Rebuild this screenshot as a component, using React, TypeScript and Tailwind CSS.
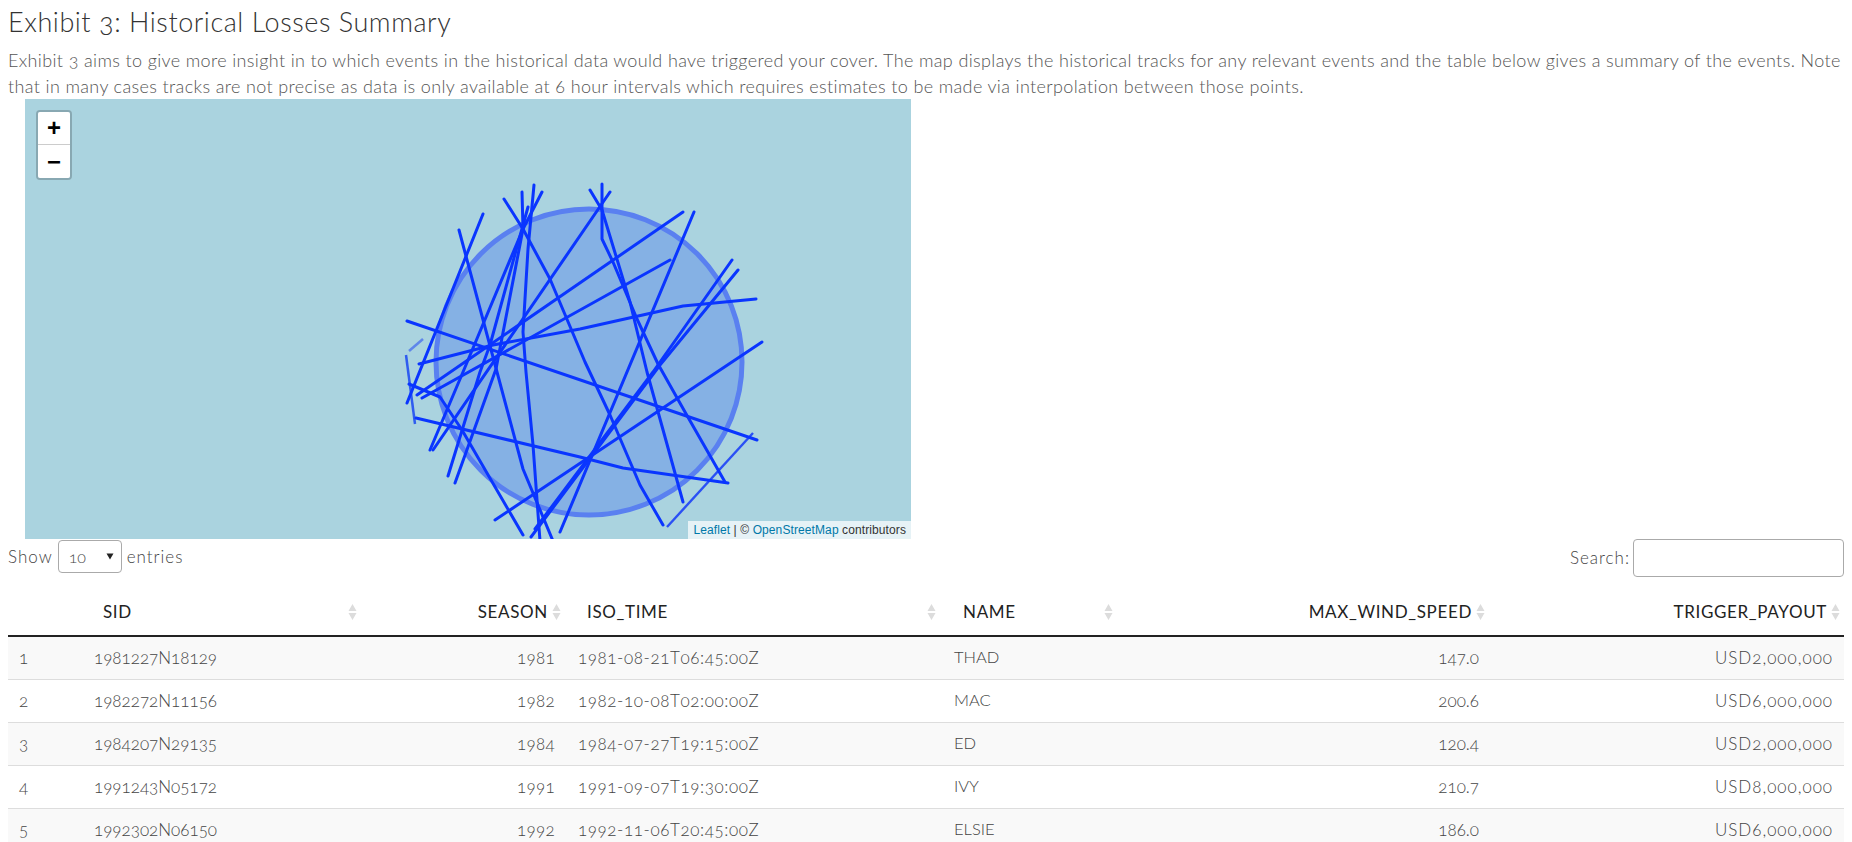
const rows = [
  ['1', '1981227N18129', '1981', '1981-08-21T06:45:00Z', 'THAD', '147.0', 'USD2,000,000'],
  ['2', '1982272N11156', '1982', '1982-10-08T02:00:00Z', 'MAC', '200.6', 'USD6,000,000'],
  ['3', '1984207N29135', '1984', '1984-07-27T19:15:00Z', 'ED', '120.4', 'USD2,000,000'],
  ['4', '1991243N05172', '1991', '1991-09-07T19:30:00Z', 'IVY', '210.7', 'USD8,000,000'],
  ['5', '1992302N06150', '1992', '1992-11-06T20:45:00Z', 'ELSIE', '186.0', 'USD6,000,000']
]

// event tracks, in page coordinates of the reference
const tracks = [
  '483,212 407,401',
  '459,228 497,370 523,467 553,539',
  '407,319 757,438',
  '419,362 493,343 580,327 683,304 756,297',
  '504,197 523,227 550,277 585,360 610,413 640,483 663,523',
  '542,190 523,227 463,370 430,448',
  '534,183 528,247 523,330 526,370 533,443 540,539',
  '522,190 523,227 496,367 455,481',
  '528,205 490,343 480,370 448,474',
  '610,190 433,448',
  '683,210 417,393',
  '670,258 422,396',
  '694,210 560,530',
  '732,258 653,370 535,527',
  '738,268 660,363 531,535',
  '762,340 495,518',
  '409,382 440,395 462,428 523,533',
  '416,416 580,455 623,466 728,481',
  '602,182 602,237 613,260 637,317 658,362 685,410 725,480',
  '590,188 602,208 630,300 647,370 683,500'
]

function SortIcon() {
  return (
    <svg width="9" height="18" viewBox="0 0 9 18" className="shrink-0 text-[#dcdcdc]">
      <path d="M4.5 1 L8.5 8 L0.5 8 Z M0.5 10 L8.5 10 L4.5 17 Z" fill="currentColor" />
    </svg>
  )
}

function Header({ label, right, pad }: { label: string; right?: boolean; pad: string }) {
  return (
    <th className={`h-[55px] pt-[7px] text-[17px] font-normal tracking-[0.65px] text-[#222] ${pad}`}>
      <div className={right ? 'flex items-center justify-end gap-[4px]' : 'flex items-center justify-between'}>
        <span>{label}</span>
        <SortIcon />
      </div>
    </th>
  )
}

export default function App() {
  return (
    <div className="h-[842px] overflow-hidden bg-white px-[8px] font-['Lato','Open_Sans',sans-serif] font-light text-[#555] [font-feature-settings:'onum']">
      <h3 className="pt-[6px] text-[27px] leading-[32px] tracking-[0.55px] text-[#333]">
        Exhibit 3: Historical Losses Summary
      </h3>
      <p className="mt-[9px] text-[18px] leading-[26px] tracking-[0.36px] text-[#555]">
        Exhibit 3 aims to give more insight in to which events in the historical data would have triggered your cover. The map displays the historical tracks for any relevant events and the table below gives a summary of the events. Note that in many cases tracks are not precise as data is only available at 6 hour intervals which requires estimates to be made via interpolation between those points.
      </p>

      <div className="relative ml-[17px] h-[440px] w-[886px] overflow-hidden bg-[#aad3df]">
        <svg width="886" height="440" viewBox="25 97 886 440" className="block">
          <circle cx="589" cy="360" r="153" fill="#85b1e4" stroke="#5a80f0" strokeWidth="5" />
          <polyline points="409,349 423,337" fill="none" stroke="#5f86ea" strokeWidth="2.5" />
          <polyline points="406,353 415,422" fill="none" stroke="#2f5cf0" strokeWidth="2.5" />
          <polyline points="753,431 667,525" fill="none" stroke="#2a50f5" strokeWidth="2.4" />
          {tracks.map(points => (
            <polyline
              key={points}
              points={points}
              fill="none"
              stroke="#0a35ff"
              strokeWidth="3"
              strokeLinecap="round"
              strokeLinejoin="round"
            />
          ))}
        </svg>
        <div className="absolute left-[11px] top-[11px] w-[36px] rounded-[4px] border-2 border-black/20 bg-clip-padding">
          <div className="flex h-[33px] items-center justify-center rounded-t-[2px] border-b border-[#ccc] bg-white font-['Liberation_Sans',sans-serif] text-[24px] font-bold text-black">
            +
          </div>
          <div className="flex h-[33px] items-center justify-center rounded-b-[2px] bg-white font-['Liberation_Sans',sans-serif] text-[24px] font-bold text-black">
            −
          </div>
        </div>
        <div className="absolute bottom-0 right-0 bg-white/70 px-[5px] font-['Liberation_Sans',sans-serif] text-[12px] font-normal leading-[18px] tracking-[0.1px] text-[#333]">
          <span className="text-[#0078a8]">Leaflet</span> | © <span className="text-[#0078a8]">OpenStreetMap</span> contributors
        </div>
      </div>

      <div className="flex h-[42px] items-start justify-between text-[17px] tracking-[1px] text-[#444]">
        <label className="flex items-center gap-[5px] pt-[1px]">
          Show
          <span className="relative">
            <select className="h-[33px] w-[64px] appearance-none rounded-[4px] border border-[#aaa] bg-white pl-[10px] text-[16px] tracking-normal text-[#444]">
              <option>10</option>
            </select>
            <svg width="8" height="7" viewBox="0 0 8 7" className="absolute right-[8px] top-[13px]">
              <path d="M0.5 0.5 L7.5 0.5 L4 6.5 Z" fill="#222" />
            </svg>
          </span>
          entries
        </label>
        <label className="flex items-center gap-[3px]">
          Search:
          <input className="h-[38px] w-[211px] rounded-[4px] border border-[#aaa] bg-white" />
        </label>
      </div>

      <table className="w-[1836px] table-fixed border-collapse text-[16px] text-[#444]">
        <colgroup>
          <col className="w-[76px]" />
          <col className="w-[277px]" />
          <col className="w-[207px]" />
          <col className="w-[376px]" />
          <col className="w-[176px]" />
          <col className="w-[369px]" />
          <col className="w-[355px]" />
        </colgroup>
        <thead>
          <tr className="border-b-2 border-[#222]">
            <th className="h-[55px]" />
            <Header label="SID" pad="pl-[19px] pr-[4px] text-left" />
            <Header label="SEASON" right pad="pr-[7px] text-right" />
            <Header label="ISO_TIME" pad="pl-[19px] pr-[8px] text-left" />
            <Header label="NAME" pad="pl-[19px] pr-[7px] text-left" />
            <Header label="MAX_WIND_SPEED" right pad="pr-[4px] text-right" />
            <Header label="TRIGGER_PAYOUT" right pad="pr-[4px] text-right" />
          </tr>
        </thead>
        <tbody>
          {rows.map((row, i) => (
            <tr key={row[0]} className={`h-[43px] border-b border-[#ddd] ${i % 2 === 0 ? 'bg-[#f9f9f9]' : 'bg-white'}`}>
              <td className="px-[11px] text-[17px]">{row[0]}</td>
              <td className="px-[10px] text-[17px]">{row[1]}</td>
              <td className="px-[13px] text-right text-[17px] tracking-[0.3px]">{row[2]}</td>
              <td className="px-[10px] text-[17px] tracking-[0.6px]">{row[3]}</td>
              <td className="px-[10px] text-[16.5px]">{row[4]}</td>
              <td className="px-[10px] text-right text-[17px]">{row[5]}</td>
              <td className="px-[11px] text-right text-[17px] tracking-[1px]">{row[6]}</td>
            </tr>
          ))}
        </tbody>
      </table>
    </div>
  )
}
